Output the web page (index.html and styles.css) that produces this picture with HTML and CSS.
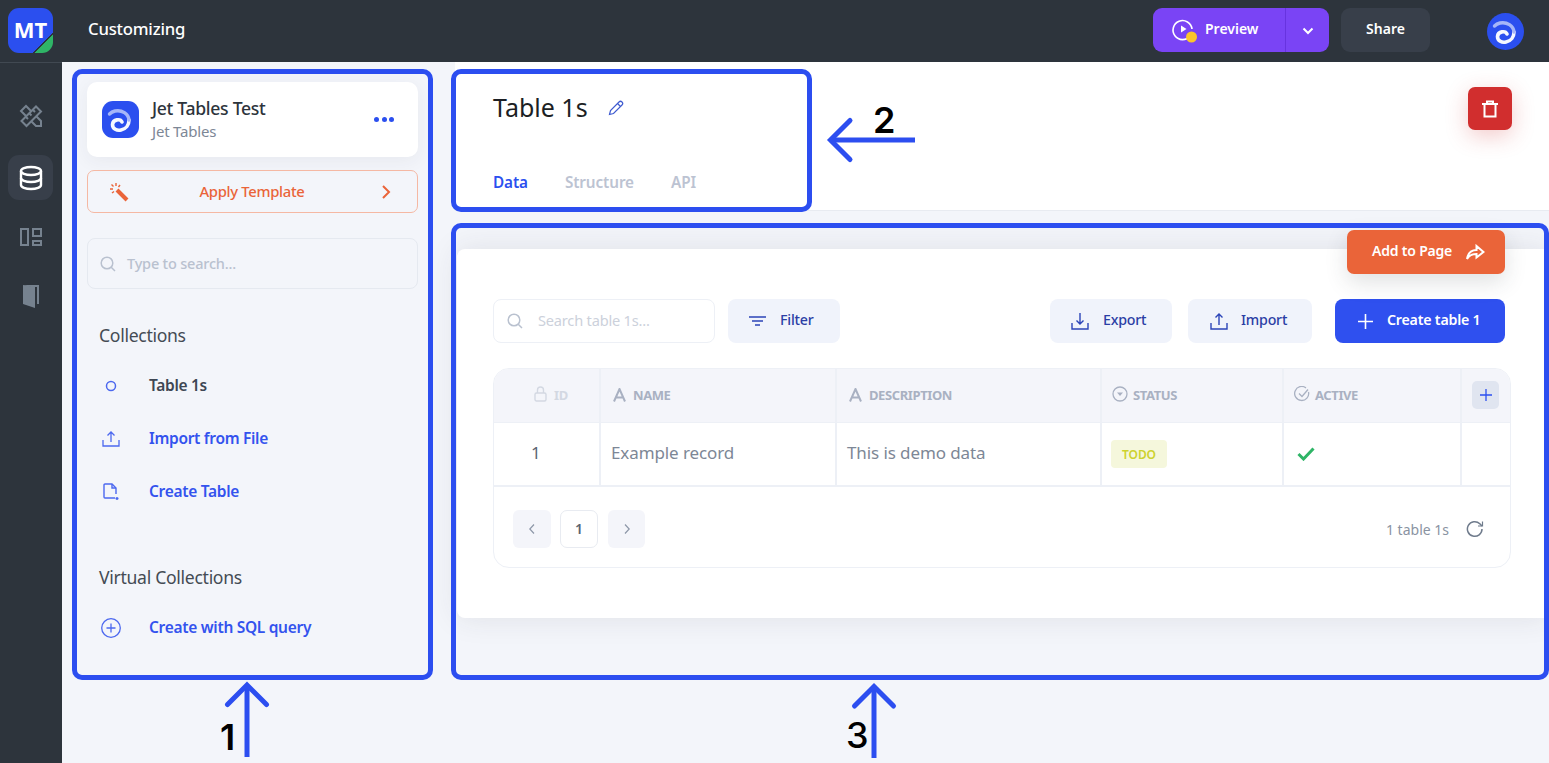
FILE: index.html
```html
<!DOCTYPE html>
<html lang="en">
<head>
<meta charset="UTF-8">
<title>Customizing</title>
<link rel="stylesheet" href="styles.css">
</head>
<body>
<div class="app">
    <nav class="rail">
        <div class="rail-top"><div class="logo">MT</div></div>
        <div class="rail-item">
            <svg width="24" height="24" viewBox="0 0 24 24" fill="none" stroke="#76828f" stroke-width="2"><path d="M2.500 17 17 2.500l5 5L7.500 22z"/><path d="M7 13l2 2M10.500 9.500l2 2M14 6l2 2"/><path d="M7 12 2 7l5-5 5 5M12 17l5 5h5v-5l-5-5"/></svg>
        </div>
        <div class="rail-item active">
            <svg width="24" height="26" viewBox="0 0 24 26" fill="none" stroke="#fff" stroke-width="2.400"><ellipse cx="12" cy="6" rx="10" ry="4"/><path d="M2 6v14c0 2.200 4.500 4 10 4s10-1.800 10-4V6"/><path d="M2 13c0 2.200 4.500 4 10 4s10-1.800 10-4"/></svg>
        </div>
        <div class="rail-item">
            <svg width="22" height="18" viewBox="0 0 22 18" fill="none" stroke="#76828f" stroke-width="2"><rect x="1" y="1" width="7" height="16"/><rect x="13" y="1" width="8" height="7"/><rect x="13" y="13" width="8" height="4"/></svg>
        </div>
        <div class="rail-item">
            <svg width="18" height="24" viewBox="0 0 18 24"><path d="M1 1h16v19h-2V3H9z" fill="#76828f"/><path d="M1 1l12 2v21l-12-4z" fill="#76828f"/></svg>
        </div>
    </nav>

    <div class="main">
        <header class="topbar">
            <div class="topbar-title">Customizing</div>
            <div class="split-btn">
                <div class="split-main">
                    <svg width="28" height="28" viewBox="0 0 28 28" fill="none"><path d="M19 20a9.500 9.500 0 1 1 2-7" stroke="#fff" stroke-width="1.600"/><path d="M10 9.500v7l5.500-3.500z" fill="#fff"/><circle cx="20.500" cy="21" r="5.500" fill="#fbc52b"/></svg>
                    <span>Preview</span>
                </div>
                <div class="split-arrow">
                    <svg width="12" height="8" viewBox="0 0 12 8" fill="none" stroke="#fff" stroke-width="2"><path d="M1.500 1.500 6 6l4.500-4.500"/></svg>
                </div>
            </div>
            <div class="share-btn">Share</div>
            <div class="avatar">
                <svg width="37" height="37" viewBox="0 0 37 37" fill="none" stroke-linecap="round"><circle cx="18.500" cy="18.500" r="18.500" fill="#2b4fef"/><path d="M20 21C18.500 17.500 11 18 10.500 23.500 10.500 28 15 30 19 29 24 28 27 24 27 19" stroke="#f6f8ff" stroke-width="3.600"/><path d="M27 19C26.500 13 20 8.500 13 10 11 10.500 9 11.500 7.500 13" stroke="#a6b6f8" stroke-width="3.400"/></svg>
            </div>
        </header>

        <div class="workspace">
            <aside class="sidebar">
                <div class="app-card">
                    <svg class="app-icon" width="37" height="37" viewBox="0 0 37 37" fill="none" stroke-linecap="round"><rect width="37" height="37" rx="11" fill="#2b4fef"/><path d="M20 21C18.500 17.500 11 18 10.500 23.500 10.500 28 15 30 19 29 24 28 27 24 27 19" stroke="#f6f8ff" stroke-width="3.600"/><path d="M27 19C26.500 13 20 8.500 13 10 11 10.500 9 11.500 7.500 13" stroke="#a6b6f8" stroke-width="3.400"/></svg>
                    <div class="app-text">
                        <div class="app-name">Jet Tables Test</div>
                        <div class="app-sub">Jet Tables</div>
                    </div>
                    <div class="dots"><i></i><i></i><i></i></div>
                </div>

                <div class="template-btn">
                    <svg width="20" height="20" viewBox="0 0 20 20" fill="none" stroke="#ea6439" stroke-width="1.400"><path d="M8 8l10 10" stroke-width="4"/><path d="M7 1v3M1 7h3M2.500 2.500l2 2M11 3 9.500 5M3 11l2-1.500"/></svg>
                    <span>Apply Template</span>
                    <svg width="10" height="16" viewBox="0 0 10 16" fill="none" stroke="#ea6439" stroke-width="2"><path d="M2 2l6 6-6 6"/></svg>
                </div>

                <div class="side-search">
                    <svg width="16" height="16" viewBox="0 0 16 16" fill="none" stroke="#b9c1cf" stroke-width="1.500"><circle cx="7" cy="7" r="5.800"/><path d="M11.200 11.200 15 15"/></svg>
                    <span>Type to search...</span>
                </div>

                <div class="side-title">Collections</div>
                <div class="side-row current">
                    <span class="side-ico"><svg width="12" height="12" viewBox="0 0 12 12" fill="none" stroke="#4c68ef" stroke-width="1.500"><circle cx="6" cy="6" r="4.500"/></svg></span>
                    <span class="side-label">Table 1s</span>
                </div>
                <div class="side-row">
                    <span class="side-ico"><svg width="18" height="16" viewBox="0 0 18 16" fill="none" stroke="#4c68ef" stroke-width="1.300"><path d="M1 9v6h16V9M9 11V1M5.500 4.500 9 1l3.500 3.500"/></svg></span>
                    <span class="side-label">Import from File</span>
                </div>
                <div class="side-row">
                    <span class="side-ico"><svg width="16" height="18" viewBox="0 0 16 18" fill="none" stroke="#4c68ef" stroke-width="1.400"><path d="M12 15H2a1 1 0 0 1-1-1V2a1 1 0 0 1 1-1h7l4 4v6"/><path d="M9 1v4h4M14 14v3M12.500 15.500h3"/></svg></span>
                    <span class="side-label">Create Table</span>
                </div>

                <div class="side-title virtual">Virtual Collections</div>
                <div class="side-row">
                    <span class="side-ico"><svg width="20" height="20" viewBox="0 0 20 20" fill="none" stroke="#4c68ef" stroke-width="1.300"><circle cx="10" cy="10" r="9.300"/><path d="M10 5.500v9M5.500 10h9"/></svg></span>
                    <span class="side-label">Create with SQL query</span>
                </div>
            </aside>

            <section class="content">
                <div class="content-head">
                    <div class="title-row">
                        <h1>Table 1s</h1>
                        <svg class="edit-ico" width="16" height="16" viewBox="0 0 16 16" fill="none" stroke="#3f5bd0" stroke-width="1.200"><path d="M1.500 14.500l1-4L11 2c1-1 2-1 3 0s1 2 0 3l-8.500 8.500z"/><path d="M9.500 3.500l3 3"/></svg>
                    </div>
                    <div class="tabs">
                        <span class="tab on">Data</span>
                        <span class="tab">Structure</span>
                        <span class="tab">API</span>
                    </div>
                    <div class="trash-btn">
                        <svg width="16" height="18" viewBox="0 0 16 18" fill="none" stroke="#fff" stroke-width="2"><path d="M0 4h16M5 4V1.500h6V4M2.500 4v12.500h11V4"/></svg>
                    </div>
                </div>

                <div class="content-body">
                    <div class="card">
                        <div class="add-page">
                            <span>Add to Page</span>
                            <svg width="19" height="16" viewBox="0 0 19 16" fill="none" stroke="#fff" stroke-width="2"><path d="M1 15c1-6 4-9 9.500-9V2l7 6-7 5.500V10C6 10 3 11.500 1 15z"/></svg>
                        </div>

                        <div class="toolbar">
                            <div class="table-search">
                                <svg width="16" height="16" viewBox="0 0 16 16" fill="none" stroke="#b9c1cf" stroke-width="1.500"><circle cx="7" cy="7" r="5.800"/><path d="M11.200 11.200 15 15"/></svg>
                                <span>Search table 1s...</span>
                            </div>
                            <div class="btn-soft filter">
                                <svg width="17" height="10" viewBox="0 0 17 10" fill="none" stroke="#2b44b8" stroke-width="1.400"><path d="M0 1h17M3 5h11M6 9h5"/></svg>
                                <span>Filter</span>
                            </div>
                            <div class="btn-soft export">
                                <svg width="18" height="18" viewBox="0 0 18 18" fill="none" stroke="#2b44b8" stroke-width="1.400"><path d="M1 11v6h16v-6M9 1v11M5.500 8.500 9 12l3.500-3.500"/></svg>
                                <span>Export</span>
                            </div>
                            <div class="btn-soft import">
                                <svg width="18" height="18" viewBox="0 0 18 18" fill="none" stroke="#2b44b8" stroke-width="1.400"><path d="M1 11v6h16v-6M9 13V2M5.500 5.500 9 2l3.500 3.500"/></svg>
                                <span>Import</span>
                            </div>
                            <div class="btn-create">
                                <svg width="15" height="15" viewBox="0 0 15 15" fill="none" stroke="#fff" stroke-width="1.600"><path d="M7.500 0v15M0 7.500h15"/></svg>
                                <span>Create table 1</span>
                            </div>
                        </div>

                        <div class="table-wrap">
                            <table class="data-table">
                                <thead>
                                    <tr>
                                        <th class="col-id"><svg width="13" height="16" viewBox="0 0 13 16" fill="none" stroke="#d3d8e2" stroke-width="1.400"><rect x="1" y="7" width="11" height="8" rx="1.500"/><path d="M3.500 7V4a3 3 0 0 1 6 0v3"/></svg><span>ID</span></th>
                                        <th class="col-name"><svg width="13" height="14" viewBox="0 0 13 14" fill="none" stroke="#a9b1c2" stroke-width="2"><path d="M1 13.500 6.500 1 12 13.500M3 9.500h7"/></svg><span>NAME</span></th>
                                        <th class="col-desc"><svg width="13" height="14" viewBox="0 0 13 14" fill="none" stroke="#a9b1c2" stroke-width="2"><path d="M1 13.500 6.500 1 12 13.500M3 9.500h7"/></svg><span>DESCRIPTION</span></th>
                                        <th class="col-status"><svg width="16" height="16" viewBox="0 0 16 16" fill="none" stroke="#a9b1c2" stroke-width="1.300"><circle cx="8" cy="8" r="7"/><path d="M5 6.500h6L8 10z" fill="#a9b1c2" stroke="none"/></svg><span>STATUS</span></th>
                                        <th class="col-active"><svg width="16" height="16" viewBox="0 0 16 16" fill="none" stroke="#a9b1c2" stroke-width="1.300"><path d="M14.500 6a7 7 0 1 1-2.500-4"/><path d="M5 7.500l3 3 6-7"/></svg><span>ACTIVE</span></th>
                                        <th class="col-add"><div class="add-col"><svg width="12" height="12" viewBox="0 0 12 12" fill="none" stroke="#2b4fef" stroke-width="1.300"><path d="M6 0v12M0 6h12"/></svg></div></th>
                                    </tr>
                                </thead>
                                <tbody>
                                    <tr>
                                        <td class="cell-text cell-id">1</td>
                                        <td class="cell-text">Example record</td>
                                        <td class="cell-text">This is demo data</td>
                                        <td><span class="badge">TODO</span></td>
                                        <td><svg class="check" width="18" height="14" viewBox="0 0 18 14" fill="none" stroke="#2fb567" stroke-width="3"><path d="M1.500 7 6.500 12 16.500 1.500"/></svg></td>
                                        <td></td>
                                    </tr>
                                </tbody>
                            </table>
                            <div class="pager">
                                <div class="page-btn"><svg width="6" height="10" viewBox="0 0 6 10" fill="none" stroke="#8d97a8" stroke-width="1.200"><path d="M5 .5.800 5 5 9.500"/></svg></div>
                                <div class="page-num">1</div>
                                <div class="page-btn next"><svg width="6" height="10" viewBox="0 0 6 10" fill="none" stroke="#8d97a8" stroke-width="1.200"><path d="M1 .5 5.200 5 1 9.500"/></svg></div>
                                <div class="page-count">1 table 1s</div>
                                <svg class="refresh" width="18" height="18" viewBox="0 0 18 18" fill="none" stroke="#6f7b8c" stroke-width="1.500"><path d="M16 9a7.300 7.300 0 1 1-2.200-5.200L16 6"/><path d="M16.500 1.500V6H12" stroke-width="1.200"/></svg>
                            </div>
                        </div>
                    </div>
                </div>
            </section>
        </div>
    </div>
</div>

<!-- annotations drawn on top of the screenshot -->
<div class="mark mark-1"></div>
<div class="mark mark-2"></div>
<div class="mark mark-3"></div>
<svg class="arrows" width="1549" height="763" viewBox="0 0 1549 763" fill="none" stroke="#2c4ef0" stroke-width="5">
    <path d="M247 757V685"/>
    <path d="M227.500 704.500 247 685l19.500 19.500" stroke-linecap="round"/>
    <path d="M915 140H832"/>
    <path d="M850 120.500 830.500 140 850 159.500" stroke-linecap="round"/>
    <path d="M874 758V686"/>
    <path d="M854.500 706 874 686.500l19.500 19.500" stroke-linecap="round"/>
</svg>
<div class="mark-num num-1">1</div>
<div class="mark-num num-2">2</div>
<div class="mark-num num-3">3</div>
</body>
</html>
```

FILE: styles.css
```css
* {
    box-sizing: border-box;
}

body {
    margin: 0;
    height: 763px;
    overflow: hidden;
    background-color: #f3f5fa;
    font-family: "Noto Sans", "Open Sans", sans-serif;
    color: #2d343c;
}

svg {
    display: block;
    flex: none;
}

.app {
    display: flex;
    height: 763px;
}

/* left rail */
.rail {
    width: 62px;
    flex: none;
    background-color: #2d343c;
}

.rail-top {
    height: 63px;
    padding: 8px;
    border-bottom: 1px solid #414952;
}

.logo {
    width: 45px;
    height: 45px;
    border-radius: 11px;
    background: linear-gradient(135deg, #2b4fef 77%, #2d343c 77%, #2d343c 80%, #2fb567 80%);
    color: white;
    font-size: 22px;
    font-weight: 700;
    line-height: 43px;
    text-align: center;
}

.rail-item {
    width: 45px;
    height: 45px;
    margin: 0 0 14px 8px;
    border-radius: 11px;
    display: flex;
    align-items: center;
    justify-content: center;
}

.rail-item:nth-child(2) {
    margin-top: 30px;
    margin-bottom: 17px;
}

.rail-item.active {
    background-color: #383f4a;
}

/* top bar */
.main {
    flex: 1;
    min-width: 0;
    display: flex;
    flex-direction: column;
}

.topbar {
    height: 62px;
    flex: none;
    background-color: #2d343c;
    display: flex;
    align-items: center;
    padding: 0 25px 2px 26px;
}

.topbar-title {
    flex: 1;
    margin-bottom: 4px;
    color: white;
    font-size: 16.700px;
    font-weight: 500;
    letter-spacing: -0.2px;
}

.split-btn {
    width: 176px;
    height: 44px;
    display: flex;
    border-radius: 9px;
    background-color: #7a44f5;
    color: white;
    font-size: 14px;
    font-weight: 600;
}

.split-main {
    width: 133px;
    display: flex;
    align-items: center;
    gap: 6px;
    padding-left: 18px;
    padding-bottom: 1px;
    border-right: 1px solid #6733df;
}

.split-main span {
    margin-top: -3px;
}

.split-arrow {
    flex: 1;
    display: flex;
    align-items: center;
    justify-content: center;
    padding-top: 2px;
}

.share-btn {
    width: 89px;
    height: 44px;
    margin-left: 12px;
    border-radius: 9px;
    background-color: #383f4a;
    color: white;
    font-size: 14px;
    font-weight: 600;
    line-height: 42px;
    text-align: center;
}

.avatar {
    margin-left: 57px;
    margin-top: 2px;
}

/* panels */
.workspace {
    flex: 1;
    display: flex;
    min-height: 0;
}

.sidebar {
    width: 393px;
    flex: none;
    padding: 20px 37px 0 25px;
}

.app-card {
    height: 75px;
    border-radius: 10px;
    background-color: white;
    box-shadow: 0 4px 18px rgba(45, 52, 60, 0.06);
    display: flex;
    align-items: center;
    padding: 0 24px 0 15px;
}

.app-text {
    flex: 1;
    margin: 0 0 2px 13px;
}

.app-name {
    font-size: 17.600px;
    font-weight: 500;
    line-height: 24px;
    letter-spacing: -0.3px;
}

.app-sub {
    margin-top: 1px;
    font-size: 15px;
    line-height: 20px;
    color: #7d8796;
    letter-spacing: -0.2px;
}

.dots {
    display: flex;
    gap: 2.500px;
}

.dots i {
    width: 5px;
    height: 5px;
    border-radius: 50%;
    background-color: #2b4fef;
}

.template-btn {
    height: 43px;
    margin-top: 13px;
    border: 1px solid #f5b8a3;
    border-radius: 7px;
    display: flex;
    align-items: center;
    justify-content: space-between;
    padding: 0 26px 0 21px;
    color: #ea6439;
    font-size: 14.800px;
    font-weight: 500;
    letter-spacing: -0.3px;
}

.template-btn span {
    margin: -2px 6px 0 0;
}

.side-search {
    height: 51px;
    margin-top: 25px;
    border: 1px solid #e5e9f0;
    border-radius: 8px;
    display: flex;
    align-items: center;
    gap: 11px;
    padding-left: 12px;
    color: #b9c1cf;
    font-size: 14.500px;
    font-weight: 500;
    letter-spacing: -0.2px;
}

.side-search span {
    margin-top: -2px;
}

.side-title {
    margin: 34px 0 0 12px;
    height: 24px;
    font-size: 17.600px;
    line-height: 24px;
    color: #444b54;
    letter-spacing: -0.3px;
}

.side-title.virtual {
    margin-top: 47px;
}

.side-row {
    height: 53px;
    display: flex;
    align-items: center;
    padding-left: 12px;
    color: #3353ee;
    font-size: 15.500px;
    font-weight: 600;
    letter-spacing: -0.3px;
}

.side-title + .side-row {
    margin-top: 12px;
}

.side-row.current {
    color: #3d4653;
}

.side-ico {
    width: 24px;
    margin-right: 26px;
    display: flex;
    justify-content: center;
}

.side-label {
    margin-top: -1px;
}

/* right side */
.content {
    flex: 1;
    min-width: 0;
    display: flex;
    flex-direction: column;
}

.content-head {
    height: 149px;
    flex: none;
    position: relative;
    background-color: white;
    border-bottom: 1px solid #e8ebf1;
    padding: 25px 0 0 38px;
}

.title-row {
    display: flex;
    align-items: center;
    gap: 20px;
    height: 40px;
}

.edit-ico {
    margin-top: 2px;
}

h1 {
    margin: 0;
    font-size: 25px;
    font-weight: 400;
    color: #1c1f24;
}

.tabs {
    display: flex;
    gap: 37px;
    margin-top: 45px;
    font-size: 15.300px;
    font-weight: 600;
    color: #bcc3d2;
    letter-spacing: -0.1px;
}

.tab.on {
    color: #2b4fef;
}

.trash-btn {
    position: absolute;
    top: 25px;
    right: 37px;
    width: 44px;
    height: 43px;
    border-radius: 7px;
    background-color: #d12e2e;
    box-shadow: 0 6px 22px rgba(209, 46, 46, 0.25);
    display: flex;
    align-items: center;
    justify-content: center;
}

.content-body {
    flex: 1;
    padding: 38px 0 0 2px;
}

.card {
    position: relative;
    height: 369px;
    background-color: white;
    border-radius: 8px 0 0 8px;
    box-shadow: 0 0 30px rgba(45, 52, 60, 0.1);
    padding: 50px 38px 0 36px;
}

.add-page {
    position: absolute;
    top: -19px;
    right: 44px;
    width: 158px;
    height: 44px;
    border-radius: 7px;
    background-color: #ea6439;
    box-shadow: 0 8px 22px rgba(45, 52, 60, 0.15);
    color: white;
    font-size: 14px;
    font-weight: 600;
    letter-spacing: -0.2px;
    display: flex;
    align-items: center;
    gap: 14px;
    padding-left: 25px;
}

.add-page span {
    margin-top: -4px;
}

.toolbar {
    display: flex;
    height: 44px;
    margin-right: 6px;
    font-size: 14.200px;
    font-weight: 500;
    letter-spacing: -0.2px;
}

.toolbar span {
    margin-top: -4px;
}

.table-search {
    width: 222px;
    border: 1px solid #edf0f6;
    border-radius: 8px;
    display: flex;
    align-items: center;
    gap: 15px;
    padding-left: 13px;
    color: #ccd1db;
    font-weight: 400;
    font-size: 14.600px;
}

.toolbar .table-search span {
    margin-top: -2px;
}

.btn-soft {
    border-radius: 8px;
    background-color: #f0f3fb;
    color: #2b3ea5;
    display: flex;
    align-items: center;
}

.filter {
    width: 112px;
    margin-left: 13px;
    gap: 14px;
    padding-left: 21px;
}

.export {
    width: 122px;
    margin-left: auto;
    gap: 14px;
    padding-left: 21px;
}

.import {
    width: 124px;
    margin-left: 16px;
    gap: 13px;
    padding-left: 22px;
}

.btn-create {
    width: 170px;
    margin-left: 23px;
    border-radius: 8px;
    background-color: #2f50ef;
    color: white;
    font-weight: 600;
    display: flex;
    align-items: center;
    gap: 14px;
    padding-left: 23px;
}

.table-wrap {
    height: 200px;
    margin-top: 25px;
    border: 1px solid #edf0f6;
    border-radius: 16px;
    overflow: hidden;
}

.data-table {
    width: 100%;
    table-layout: fixed;
    border-collapse: collapse;
}

.data-table th {
    height: 53px;
    padding: 0 0 0 12px;
    background-color: #f4f5fa;
    border-right: 2px solid #edf0f6;
    border-bottom: 1px solid #edf0f6;
    text-align: left;
    font-size: 13px;
    font-weight: 700;
    color: #a9b1c2;
    letter-spacing: -0.4px;
}

.data-table th svg {
    display: inline-block;
    vertical-align: -2px;
    margin-right: 7px;
}

.data-table th:last-child,
.data-table td:last-child {
    border-right: none;
}

.col-id {
    width: 106px;
}

.col-name {
    width: 236px;
}

.col-desc {
    width: 265px;
}

.col-status {
    width: 182px;
}

.col-active {
    width: 178px;
}

.data-table th.col-id {
    padding-left: 40px;
    color: #d3d8e2;
}

.data-table th.col-status,
.data-table th.col-active {
    padding-left: 10px;
}

.data-table th.col-status svg,
.data-table th.col-active svg {
    margin-right: 5px;
}

.data-table td {
    height: 64px;
    padding: 0 0 0 10px;
    border-right: 2px solid #edf0f6;
    border-bottom: 2px solid #edf0f6;
    font-size: 17px;
    color: #7d8796;
    letter-spacing: -0.1px;
}

.data-table td.cell-text {
    padding-bottom: 3px;
}

.data-table td.cell-id {
    padding-left: 37px;
    color: #5a6472;
}

.add-col {
    width: 27px;
    height: 28px;
    border-radius: 5px;
    background-color: #e0e5f0;
    display: flex;
    align-items: center;
    justify-content: center;
}

.data-table th.col-add {
    padding-left: 10px;
}

.data-table th.col-add svg {
    margin: 0;
}

.badge {
    display: inline-block;
    width: 56px;
    height: 28px;
    margin: 1px 0 0 -1px;
    border-radius: 4px;
    background-color: #f5f7dc;
    color: #cdd22e;
    font-size: 12px;
    font-weight: 600;
    line-height: 30px;
    text-align: center;
}

.check {
    margin-left: 3px;
}

.pager {
    display: flex;
    align-items: center;
    padding: 23px 26px 0 19px;
}

.page-btn {
    width: 38px;
    height: 38px;
    border-radius: 6px;
    background-color: #f4f5fa;
    display: flex;
    align-items: center;
    justify-content: center;
}

.page-btn.next {
    width: 37px;
}

.page-num {
    width: 38px;
    height: 38px;
    margin: 0 10px 0 9px;
    border: 1px solid #e8ebf1;
    border-radius: 7px;
    font-size: 14px;
    font-weight: 600;
    color: #5a6472;
    line-height: 36px;
    text-align: center;
}

.page-count {
    margin-left: auto;
    margin-right: 17px;
    font-size: 14px;
    color: #8a93a2;
}

/* blue annotation frames and arrows */
.mark {
    position: absolute;
    border: 5px solid #2c4ef0;
    border-radius: 10px;
}

.mark-1 {
    left: 72px;
    top: 69px;
    width: 361px;
    height: 611px;
}

.mark-2 {
    left: 451px;
    top: 69px;
    width: 361px;
    height: 143px;
}

.mark-3 {
    left: 451px;
    top: 223px;
    width: 1098px;
    height: 457px;
}

.arrows {
    position: absolute;
    left: 0;
    top: 0;
}

.mark-num {
    position: absolute;
    font-family: Inter, "Liberation Sans", sans-serif;
    font-size: 36px;
    font-weight: 600;
    line-height: 36px;
    color: black;
}

.num-1 {
    left: 220px;
    top: 719px;
}

.num-2 {
    left: 873px;
    top: 102px;
}

.num-3 {
    left: 846px;
    top: 717px;
    font-weight: 500;
}
```
